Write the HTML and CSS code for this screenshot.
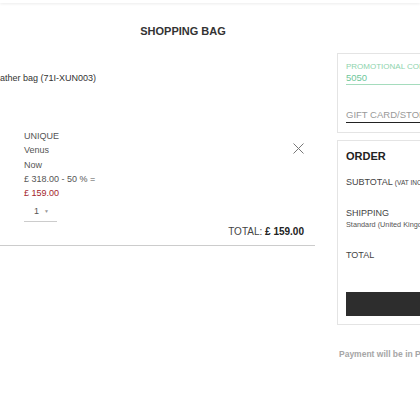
FILE: index.html
```html
<!DOCTYPE html>
<html>
<head>
<meta charset="utf-8">
<link rel="stylesheet" href="styles.css">
</head>
<body>
<div class="topbar"></div>
<h1 class="title">SHOPPING BAG</h1>
<div class="layout">
  <section class="bag">
    <p class="product-name">ather bag (71I-XUN003)</p>
    <div class="item">
      <div class="details">
        <div class="line">UNIQUE</div>
        <div class="line">Venus</div>
        <div class="line">Now</div>
        <div class="line">£ 318.00 - 50 % =</div>
        <div class="line price">£ 159.00</div>
        <div class="qty"><span>1</span><span class="caret">▼</span></div>
      </div>
      <button class="remove" aria-label="Remove">
        <svg width="11" height="11" viewBox="0 0 11 11"><path d="M0.5 0.5 L10.5 10.5 M10.5 0.5 L0.5 10.5" stroke="#777" stroke-width="1" fill="none"/></svg>
      </button>
    </div>
    <div class="total">TOTAL: <b>£ 159.00</b></div>
  </section>
  <aside class="side">
    <div class="box promo">
      <div class="promo-label">PROMOTIONAL CODE</div>
      <div class="promo-input">5050</div>
      <div class="gift-input">GIFT CARD/STORE CREDIT</div>
    </div>
    <div class="box order">
      <div class="order-title">ORDER</div>
      <div class="row subtotal">SUBTOTAL <small>(VAT INCLUDED)</small></div>
      <div class="row shipping">SHIPPING</div>
      <div class="ship-note">Standard (United Kingdom)</div>
      <div class="row grand">TOTAL</div>
      <div class="checkout"></div>
    </div>
    <p class="payment">Payment will be in Pound sterling</p>
  </aside>
</div>
</body>
</html>
```
FILE: styles.css
```css
html, body {
  margin: 0;
  padding: 0;
  overflow: hidden;
  background: #fff;
  font-family: "Liberation Sans", Arial, sans-serif;
  color: #333;
}
.topbar {
  height: 3px;
  box-shadow: 0 1px 3px rgba(0,0,0,0.08);
  background: #fff;
}
.title {
  width: 366px;
  margin: 21px 0 0;
  font-size: 11px;
  line-height: 14px;
  font-weight: bold;
  text-align: center;
  color: #333;
}
.layout {
  display: flex;
  align-items: flex-start;
  gap: 22px;
  margin-top: 15px;
  width: 600px;
}
.bag {
  width: 315px;
  flex: none;
  padding-top: 19px;
  border-bottom: 1px solid #ccc;
  padding-bottom: 6px;
}
.product-name {
  margin: 0;
  font-size: 9px;
  line-height: 12px;
  color: #333;
  white-space: nowrap;
}
.item {
  display: flex;
  justify-content: space-between;
  align-items: flex-start;
  margin-top: 45px;
  padding: 0 11px 0 24px;
}
.details {
  font-size: 9px;
  color: #555;
}
.line {
  line-height: 14.25px;
}
.price {
  color: #a3242b;
}
.qty {
  display: flex;
  align-items: center;
  gap: 5px;
  width: 33px;
  box-sizing: border-box;
  padding: 0 0 2px 10px;
  margin-top: 3px;
  line-height: 16px;
  border-bottom: 1px solid #ccc;
  color: #555;
}
.caret {
  font-size: 5px;
  color: #999;
}
.remove {
  margin: 14px 0 0;
  padding: 0;
  border: 0;
  background: none;
  width: 11px;
  height: 11px;
  display: block;
}
.remove svg {
  display: block;
}
.total {
  margin-top: 3px;
  padding-right: 11px;
  text-align: right;
  font-size: 10px;
  line-height: 14px;
  color: #444;
}
.total b {
  color: #222;
}
.side {
  width: 240px;
  flex: none;
}
.box {
  border: 1px solid #e4e4e4;
  background: #fff;
}
.promo {
  padding: 8px 0 9px 8px;
}
.promo-label {
  font-size: 8px;
  line-height: 10px;
  color: #8ed3ad;
  white-space: nowrap;
}
.promo-input {
  font-size: 9.5px;
  line-height: 12px;
  color: #6fc79a;
  border-bottom: 1px solid #a5dcbd;
}
.gift-input {
  margin-top: 24px;
  font-size: 9.5px;
  line-height: 12px;
  padding-bottom: 1px;
  color: #999;
  border-bottom: 1px solid #222;
  white-space: nowrap;
}
.order {
  margin-top: 7px;
  padding: 8px 0 8px 8px;
}
.order-title {
  font-size: 11px;
  line-height: 14px;
  font-weight: bold;
  color: #222;
}
.row {
  font-size: 9px;
  line-height: 12px;
  color: #444;
  white-space: nowrap;
}
.row small {
  font-size: 6.5px;
}
.subtotal {
  margin-top: 13px;
}
.shipping {
  margin-top: 18px;
}
.ship-note {
  margin-top: 2px;
  font-size: 7.3px;
  line-height: 8px;
  color: #555;
  white-space: nowrap;
}
.grand {
  margin-top: 20px;
}
.checkout {
  margin-top: 31px;
  height: 24px;
  background: #2d2d2d;
}
.payment {
  margin: 24px 0 0 2px;
  font-size: 8.5px;
  line-height: 10px;
  font-weight: bold;
  color: #a6a6a6;
  white-space: nowrap;
}
```
